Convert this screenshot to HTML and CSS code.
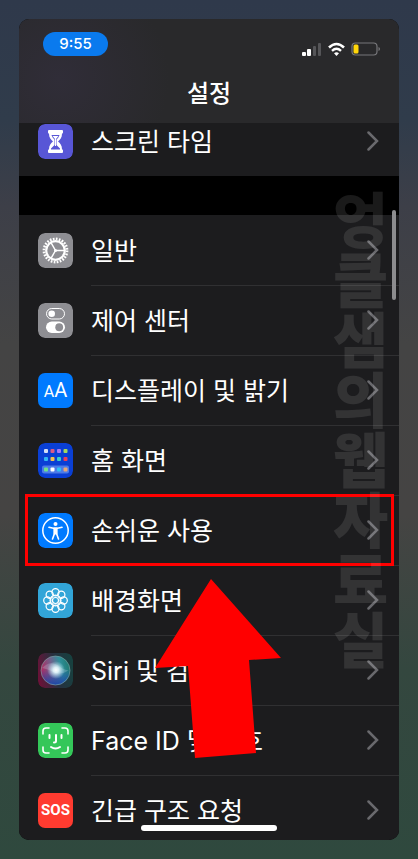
FILE: index.html
```html
<!DOCTYPE html>
<html lang="ko">
<head>
    <meta charset="UTF-8">
    <meta name="viewport" content="width=device-width, initial-scale=1.0">
    <title>설정</title>
    <link rel="stylesheet" href="styles.css">
</head>
<body>
    <main class="phone">
        <header class="header">
            <div class="status-bar">
                <span class="time">9:55</span>
                <svg class="status-icons" viewBox="0 0 80 16" aria-hidden="true">
                    <rect x="1" y="11" width="4" height="4" rx="1" fill="#fff"/>
                    <rect x="6" y="8" width="4" height="7" rx="1" fill="#fff"/>
                    <rect x="12" y="5" width="3" height="10" rx="1" fill="#555558"/>
                    <rect x="17" y="2" width="3" height="13" rx="1" fill="#555558"/>
                    <path d="M28 6.500Q35.500 -.500 43 6.500" fill="none" stroke="#fff" stroke-width="2.600"/>
                    <path d="M31 9.800Q35.500 5.600 40 9.800" fill="none" stroke="#fff" stroke-width="2.400"/>
                    <path d="M33 12.300Q35.500 10 38 12.300L35.500 15Z" fill="#fff"/>
                    <rect x="51" y="2" width="25" height="12" rx="3.500" fill="none" stroke="#77777a" stroke-width="1.200"/>
                    <rect x="52.500" y="3.500" width="5" height="9" rx="1.500" fill="#ffd60a"/>
                    <path d="M77.500 6v4q1.500-.5 1.500-2t-1.500-2" fill="#77777a"/>
                </svg>
            </div>
            <h1>설정</h1>
        </header>

        <nav class="group group-top">
            <a class="row" href="#">
                <svg class="icon" viewBox="0 0 35 35" aria-hidden="true">
                    <rect width="35" height="35" rx="7" fill="#5856d6"/>
                    <path d="M11 6h13q1 0 1 1v1.500q0 1-1 1.300c0 4-2 6-4 7.700 2 1.700 4 3.700 4 7.700q1 .3 1 1.300V28q0 1-1 1H11q-1 0-1-1v-1.500q0-1 1-1.300c0-4 2-6 4-7.700-2-1.700-4-3.700-4-7.700q-1-.3-1-1.300V7q0-1 1-1z" fill="#fff"/>
                    <path d="M13.500 11h8c-.5 2-1.500 3-3 4.500v5.500l3.500 3.500v1h-9v-1l3.500-3.500v-5.500c-1.500-1.500-2.500-2.500-3-4.500z" fill="#5856d6"/>
                    <path d="M14.500 12h6l-2.500 3v7h-1v-7z" fill="#fff"/>
                </svg>
                <span class="label">스크린 타임</span>
                <svg class="chevron" viewBox="0 0 12 20" aria-hidden="true"><path d="M1.500 1.500L10 10l-8.500 8.500"/></svg>
            </a>
        </nav>

        <nav class="group group-main">
            <a class="row" href="#">
                <svg class="icon" viewBox="0 0 35 35" aria-hidden="true">
                    <rect width="35" height="35" rx="7" fill="#8e8e93"/>
                    <circle cx="17.500" cy="17.500" r="11.600" fill="none" stroke="#fff" stroke-width="2.600" stroke-dasharray="1.700 1.337"/>
                    <circle cx="17.500" cy="17.500" r="9.300" fill="none" stroke="#fff" stroke-width="2.200"/>
                    <path d="M17.500 17.500h9M17.500 17.500l-4.500-7.800M17.500 17.500l-4.500 7.800" stroke="#fff" stroke-width="1.500"/>
                    <circle cx="17.500" cy="17.500" r="1.500" fill="#fff"/>
                </svg>
                <span class="label">일반</span>
                <svg class="chevron" viewBox="0 0 12 20" aria-hidden="true"><path d="M1.500 1.500L10 10l-8.500 8.500"/></svg>
            </a>
            <a class="row" href="#">
                <svg class="icon" viewBox="0 0 35 35" aria-hidden="true">
                    <rect width="35" height="35" rx="7" fill="#8e8e93"/>
                    <rect x="8.500" y="5.500" width="18" height="10.500" rx="5.250" fill="none" stroke="#fff"/>
                    <circle cx="13.700" cy="10.750" r="3.300" fill="#fff"/>
                    <rect x="8" y="18.500" width="19" height="11.500" rx="5.750" fill="#fff"/>
                    <circle cx="21.200" cy="24.250" r="3.900" fill="#8e8e93"/>
                </svg>
                <span class="label">제어 센터</span>
                <svg class="chevron" viewBox="0 0 12 20" aria-hidden="true"><path d="M1.500 1.500L10 10l-8.500 8.500"/></svg>
            </a>
            <a class="row" href="#">
                <span class="icon icon-display" aria-hidden="true"><small>A</small>A</span>
                <span class="label">디스플레이 및 밝기</span>
                <svg class="chevron" viewBox="0 0 12 20" aria-hidden="true"><path d="M1.500 1.500L10 10l-8.500 8.500"/></svg>
            </a>
            <a class="row" href="#">
                <svg class="icon" viewBox="0 0 35 35" aria-hidden="true">
                    <rect width="35" height="35" rx="7" fill="#0a3fd4"/>
                    <rect x="4" y="22.500" width="27" height="8" rx="2" fill="#4c7be8"/>
                    <rect x="6" y="6" width="4" height="4" rx="1" fill="#d5def5"/>
                    <rect x="12.500" y="6" width="4" height="4" rx="1" fill="#dc5a86"/>
                    <rect x="19" y="6" width="4" height="4" rx="1" fill="#a678f5"/>
                    <rect x="25.500" y="6" width="4" height="4" rx="1" fill="#a4da5c"/>
                    <rect x="6" y="14" width="4" height="4" rx="1" fill="#32b5f2"/>
                    <rect x="12.500" y="14" width="4" height="4" rx="1" fill="#f5c04c"/>
                    <rect x="19" y="14" width="4" height="4" rx="1" fill="#3bd0c8"/>
                    <rect x="25.500" y="14" width="4" height="4" rx="1" fill="#e8405c"/>
                    <rect x="6" y="24.500" width="4" height="4" rx="1" fill="#6fe28b"/>
                    <rect x="12.500" y="24.500" width="4" height="4" rx="1" fill="#fff"/>
                    <rect x="19" y="24.500" width="4" height="4" rx="1" fill="#2fc2f5"/>
                    <rect x="25.500" y="24.500" width="4" height="4" rx="1" fill="#e8a878"/>
                </svg>
                <span class="label">홈 화면</span>
                <svg class="chevron" viewBox="0 0 12 20" aria-hidden="true"><path d="M1.500 1.500L10 10l-8.500 8.500"/></svg>
            </a>
            <a class="row selected" href="#">
                <svg class="icon" viewBox="0 0 35 35" aria-hidden="true">
                    <rect width="35" height="35" rx="7" fill="#007aff"/>
                    <circle cx="17.500" cy="17.500" r="12.700" fill="none" stroke="#fff" stroke-width="1.500"/>
                    <circle cx="17.500" cy="11" r="2" fill="#fff"/>
                    <path d="M11 14.300l4.500 1h4l4.500-1M16.500 16.500v4L14.500 26M18.500 16.500v4l2 5.500" fill="none" stroke="#fff" stroke-width="1.600" stroke-linecap="round"/>
                    <path d="M15.500 14.500h4v7h-4z" fill="#fff"/>
                </svg>
                <span class="label">손쉬운 사용</span>
                <svg class="chevron" viewBox="0 0 12 20" aria-hidden="true"><path d="M1.500 1.500L10 10l-8.500 8.500"/></svg>
            </a>
            <a class="row" href="#">
                <svg class="icon" viewBox="0 0 35 35" aria-hidden="true">
                    <rect width="35" height="35" rx="7" fill="#32a5d8"/>
                    <g fill="none" stroke="#fff" stroke-width="1.200">
                        <circle cx="17.500" cy="9.300" r="3.600"/>
                        <circle cx="23.300" cy="11.700" r="3.600"/>
                        <circle cx="25.700" cy="17.500" r="3.600"/>
                        <circle cx="23.300" cy="23.300" r="3.600"/>
                        <circle cx="17.500" cy="25.700" r="3.600"/>
                        <circle cx="11.700" cy="23.300" r="3.600"/>
                        <circle cx="9.300" cy="17.500" r="3.600"/>
                        <circle cx="11.700" cy="11.700" r="3.600"/>
                        <circle cx="17.500" cy="17.500" r="3"/>
                        <circle cx="17.500" cy="17.500" r="5.500"/>
                    </g>
                </svg>
                <span class="label">배경화면</span>
                <svg class="chevron" viewBox="0 0 12 20" aria-hidden="true"><path d="M1.500 1.500L10 10l-8.500 8.500"/></svg>
            </a>
            <a class="row" href="#">
                <svg class="icon" viewBox="0 0 35 35" aria-hidden="true">
                    <defs>
                        <linearGradient id="siri-bg" x1="0" y1="0.600" x2="1" y2="0.400">
                            <stop offset="0" stop-color="#6a1238"/>
                            <stop offset="0.500" stop-color="#27303f"/>
                            <stop offset="1" stop-color="#17403f"/>
                        </linearGradient>
                        <linearGradient id="siri-orb" x1="0" y1="0.600" x2="1" y2="0.400">
                            <stop offset="0" stop-color="#b8245c"/>
                            <stop offset="0.400" stop-color="#70628c"/>
                            <stop offset="0.700" stop-color="#2f8f9a"/>
                            <stop offset="1" stop-color="#1f7a70"/>
                        </linearGradient>
                        <linearGradient id="siri-low" x1="0" y1="0" x2="0" y2="1">
                            <stop offset="0.450" stop-color="#1c48a8" stop-opacity="0"/>
                            <stop offset="1" stop-color="#1c48a8"/>
                        </linearGradient>
                        <radialGradient id="siri-glow">
                            <stop offset="0" stop-color="#fff"/>
                            <stop offset="0.300" stop-color="#e8fbff" stop-opacity="0.900"/>
                            <stop offset="1" stop-color="#bfe8f5" stop-opacity="0"/>
                        </radialGradient>
                    </defs>
                    <rect width="35" height="35" rx="7" fill="url(#siri-bg)"/>
                    <circle cx="17.500" cy="17.500" r="14.500" fill="url(#siri-orb)"/>
                    <circle cx="17.500" cy="17.500" r="14.500" fill="url(#siri-low)" stroke="#7fa8a8" stroke-opacity="0.600"/>
                    <path d="M4 15q9-9 18-1 5 4 9 3-7 5-13 3-8-4-14-5z" fill="#c9dcec" fill-opacity="0.250"/>
                    <circle cx="18" cy="17" r="9" fill="url(#siri-glow)"/>
                </svg>
                <span class="label">Siri 및 검색</span>
                <svg class="chevron" viewBox="0 0 12 20" aria-hidden="true"><path d="M1.500 1.500L10 10l-8.500 8.500"/></svg>
            </a>
            <a class="row" href="#">
                <svg class="icon" viewBox="0 0 35 35" aria-hidden="true">
                    <rect width="35" height="35" rx="7" fill="#34c759"/>
                    <g fill="none" stroke="#fff" stroke-width="1.600" stroke-linecap="round">
                        <path d="M5 11V8q0-3 3-3h3M24 5h3q3 0 3 3v3M30 24v3q0 3-3 3h-3M11 30H8q-3 0-3-3v-3"/>
                        <path d="M11.500 12v3M23.500 12v3M18 12v6q0 1.500-2 1.500M13 24q4.500 3 9 0" stroke-width="2"/>
                    </g>
                </svg>
                <span class="label">Face ID 및 암호</span>
                <svg class="chevron" viewBox="0 0 12 20" aria-hidden="true"><path d="M1.500 1.500L10 10l-8.500 8.500"/></svg>
            </a>
            <a class="row" href="#">
                <span class="icon icon-sos" aria-hidden="true">SOS</span>
                <span class="label">긴급 구조 요청</span>
                <svg class="chevron" viewBox="0 0 12 20" aria-hidden="true"><path d="M1.500 1.500L10 10l-8.500 8.500"/></svg>
            </a>
        </nav>

        <div class="watermark">엉클샘의웹자료실</div>
        <div class="scrollbar"></div>
        <div class="home-indicator"></div>
        <svg class="arrow" viewBox="0 0 126 180" aria-hidden="true">
            <path d="M56 0L126 79 94 81 101 174 40 179 33 87 0 89z" fill="#f00"/>
        </svg>
    </main>
</body>
</html>
```

FILE: styles.css
```css
* {
    box-sizing: border-box;
}

body {
    margin: 0;
    padding: 19px;
    min-height: 100vh;
    background: linear-gradient(#2f394b 0%, #303c4b 14%, #3d3f48 24%, #444 40%, #454443 60%, #34473f 78%, #2f493e 100%);
    color: #fff;
    font-family: Inter, "Noto Sans CJK KR", sans-serif;
}

.phone {
    position: relative;
    overflow: hidden;
    height: calc(100vh - 38px);
    border-radius: 10px;
    background-color: #000;
}

.header {
    height: 104px;
    padding: 13px 18px 0;
    background: radial-gradient(circle at 40px 60px, #302d38, #29292b 110px);
}

.status-bar {
    display: flex;
    justify-content: space-between;
    align-items: flex-start;
}

.time {
    width: 65px;
    margin-left: 6px;
    border-radius: 12px;
    background-color: #0a7aee;
    font-size: 15px;
    font-weight: 500;
    line-height: 24px;
    text-align: center;
}

.status-icons {
    width: 80px;
    height: 16px;
    margin-top: 9px;
}

h1 {
    margin: 19px 0 0;
    font-size: 24px;
    font-weight: 500;
    line-height: 36px;
    text-align: center;
}

.group {
    background-color: #1c1c1e;
}

.group-top {
    display: flex;
    align-items: flex-end;
    height: 53px;
    overflow: hidden;
}

.group-main {
    margin-top: 39px;
    padding-bottom: 70px;
}

.row {
    display: flex;
    align-items: center;
    width: 100%;
    height: 70px;
    padding: 0 20px 0 19px;
    color: #fff;
    text-decoration: none;
}

.group-main .row + .row {
    background: linear-gradient(#303032, #303032) 72px 0 / 100% 1px no-repeat;
}

.icon {
    flex: none;
    width: 35px;
    height: 35px;
    border-radius: 7px;
}

.icon-display,
.icon-sos {
    display: flex;
    align-items: baseline;
    justify-content: center;
    line-height: 35px;
}

.icon-display {
    background-color: #007aff;
    font-family: Roboto, sans-serif;
    font-size: 20px;
}

.icon-display small {
    font-size: 16px;
}

.icon-sos {
    background-color: #ff3b30;
    font-family: Roboto, sans-serif;
    font-size: 15px;
    font-weight: 700;
}

.label {
    flex: 1;
    margin-left: 18px;
    padding-top: 2px;
    font-size: 25px;
    line-height: 36px;
    white-space: nowrap;
}

.chevron {
    flex: none;
    width: 12px;
    height: 20px;
    fill: none;
    stroke: #69696d;
    stroke-width: 2.5;
    stroke-linecap: round;
}

/* red frame around the highlighted item */
.selected {
    position: relative;
}

.selected::after {
    content: "";
    position: absolute;
    inset: -1px 5px -1px 6px;
    border: 3px solid #f00;
}

.watermark {
    position: absolute;
    top: 172px;
    right: 6px;
    width: 60px;
    color: rgba(255, 255, 255, 0.1);
    font-size: 60px;
    font-weight: 900;
    line-height: 60px;
    word-break: break-all;
    pointer-events: none;
}

.scrollbar {
    position: absolute;
    top: 191px;
    right: 3px;
    width: 4px;
    height: 90px;
    border-radius: 2px;
    background-color: #8c8c8e;
}

.home-indicator {
    position: absolute;
    bottom: 9px;
    left: 50%;
    width: 136px;
    height: 6px;
    margin-left: -68px;
    border-radius: 3px;
    background-color: #fff;
}

.arrow {
    position: absolute;
    top: 560px;
    left: 136px;
    width: 126px;
    height: 180px;
    pointer-events: none;
}
```
